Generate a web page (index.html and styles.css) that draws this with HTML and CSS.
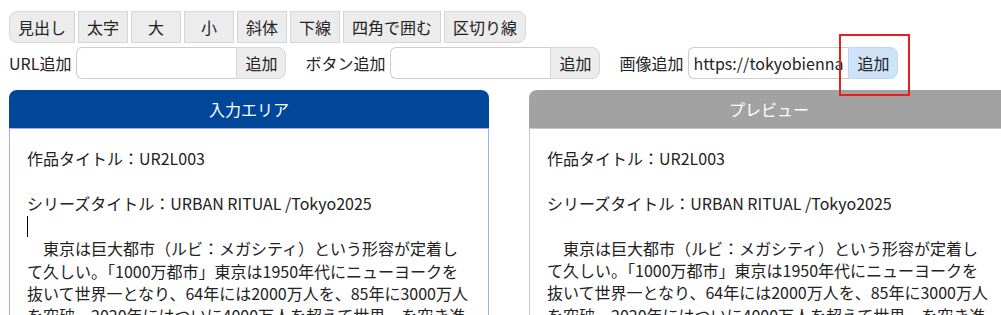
FILE: index.html
```html
<!DOCTYPE html>
<html lang="ja">
<head>
    <meta charset="UTF-8">
    <title>キャプション編集</title>
    <link rel="stylesheet" href="styles.css">
</head>
<body>
    <div class="page">
        <div class="toolbar">
            <button class="tool">見出し</button>
            <button class="tool">太字</button>
            <button class="tool">大</button>
            <button class="tool">小</button>
            <button class="tool">斜体</button>
            <button class="tool">下線</button>
            <button class="tool">四角で囲む</button>
            <button class="tool">区切り線</button>
        </div>

        <div class="addbar">
            <div class="add-group">
                <label class="add-label">URL追加</label>
                <input class="add-input" type="text">
                <button class="add-btn">追加</button>
            </div>
            <div class="add-group">
                <label class="add-label">ボタン追加</label>
                <input class="add-input" type="text">
                <button class="add-btn">追加</button>
            </div>
            <div class="add-group">
                <label class="add-label">画像追加</label>
                <input class="add-input" type="text" value="https://tokyobiennale.jp/wp-content/uploads/ur2l003.jpg">
                <span class="btn-wrap">
                    <button class="add-btn active">追加</button>
                    <!-- annotation marker -->
                    <span class="marker"></span>
                </span>
            </div>
        </div>

        <div class="panels">
            <div class="panel">
                <div class="panel-head input-head">入力エリア</div>
                <div class="editor">作品タイトル：UR2L003

シリーズタイトル：URBAN RITUAL /Tokyo2025
<span class="caret"></span>
　東京は巨大都市（ルビ：メガシティ）という形容が定着して久しい。「1000万都市」東京は1950年代にニューヨークを抜いて世界一となり、64年には2000万人を、85年に3000万人を突破、2020年にはついに4000万人を超えて世界一を突き進んでいる。</div>
            </div>
            <div class="panel">
                <div class="panel-head preview-head">プレビュー</div>
                <div class="preview">
                    <p>作品タイトル：UR2L003</p>
                    <p>シリーズタイトル：URBAN RITUAL /Tokyo2025</p>
                    <p>　東京は巨大都市（ルビ：メガシティ）という形容が定着して久しい。「1000万都市」東京は1950年代にニューヨークを抜いて世界一となり、64年には2000万人を、85年に3000万人を突破、2020年にはついに4000万人を超えて世界一を突き進んでいる。</p>
                </div>
            </div>
        </div>
    </div>
</body>
</html>
```

FILE: styles.css
```css
html, body {
    margin: 0;
    padding: 0;
    overflow: hidden;
}
body {
    font-family: "Noto Sans CJK JP", "Noto Sans", sans-serif;
    font-size: 16px;
    color: #222;
    background: #fff;
}
.page {
    padding: 11px 9px 0;
}

/* formatting buttons */
.toolbar {
    display: flex;
    gap: 3px;
}
.tool {
    font-family: inherit;
    font-size: 16px;
    color: #222;
    height: 32px;
    min-width: 50px;
    padding: 0 8px;
    background: #ececec;
    border: 1px solid #d6d6d6;
    border-radius: 0;
    box-sizing: border-box;
    line-height: 30px;
}
.tool:first-child {
    border-radius: 8px 0 0 8px;
}
.tool:last-child {
    border-radius: 0 8px 8px 0;
}

/* add url / button / image */
.addbar {
    display: flex;
    gap: 19px;
    margin-top: 4px;
}
.add-group {
    display: flex;
    align-items: center;
}
.add-label {
    margin-right: 5px;
    white-space: nowrap;
}
.add-input {
    font-family: inherit;
    font-size: 16px;
    color: #222;
    width: 160px;
    height: 32px;
    box-sizing: border-box;
    padding: 0 4px;
    border: 1px solid #cccccc;
    border-right: none;
    border-radius: 6px 0 0 6px;
    outline: none;
}
.btn-wrap {
    position: relative;
    display: flex;
}
.add-btn {
    font-family: inherit;
    font-size: 16px;
    color: #222;
    height: 32px;
    min-width: 50px;
    padding: 0 8px;
    box-sizing: border-box;
    background: #ececec;
    border: 1px solid #d6d6d6;
    border-radius: 0 8px 8px 0;
}
.add-btn.active {
    background: #cfe3f8;
    border-color: #c2d6ec;
}
.marker {
    position: absolute;
    left: -9px;
    top: -13px;
    width: 67px;
    height: 58px;
    border: 2px solid #e3221e;
}

/* editor and preview */
.panels {
    display: flex;
    gap: 40px;
    margin-top: 11px;
}
.panel {
    flex: 0 0 480px;
}
.panel-head {
    height: 38px;
    line-height: 38px;
    text-align: center;
    color: #fff;
    border-radius: 8px 8px 0 0;
}
.input-head {
    background: #00479a;
}
.preview-head {
    background: #a2a2a2;
}
.editor,
.preview {
    height: 400px;
    box-sizing: border-box;
    padding: 18px 17px;
    line-height: 1.4;
    background: #fff;
}
.editor {
    border: 1px solid #a7acf0;
    white-space: pre-wrap;
}
.preview {
    border: 1px solid #c8c8c8;
}
.preview p {
    margin: 0 0 22.4px;
}
.caret {
    display: inline-block;
    width: 1px;
    height: 21px;
    background: #000;
    vertical-align: -5px;
}
```
